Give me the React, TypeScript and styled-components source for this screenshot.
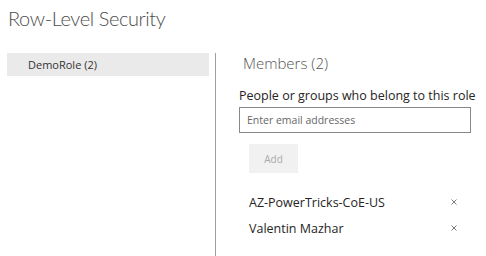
import React from "react";
import styled, { createGlobalStyle } from "styled-components";

const Global = createGlobalStyle`
  html, body { margin: 0; padding: 0; background: #fff; }
  body { font-family: "Open Sans", "Noto Sans", sans-serif; color: #252423; }
`;

const Page = styled.div`
  width: 486px;
  height: 256px;
  overflow: hidden;
  display: flex;
  flex-direction: column;
`;

const Title = styled.h1`
  margin: 0;
  padding: 5px 0 0 8px;
  height: 48px;
  box-sizing: border-box;
  font-family: "Lato", "Open Sans", sans-serif;
  font-size: 20px;
  font-weight: 300;
  letter-spacing: -0.4px;
  color: #4d4d4d;
  line-height: 26px;
`;

const Body = styled.div`
  flex: 1;
  display: flex;
  padding-top: 5px;
`;

const Sidebar = styled.div`
  width: 208px;
  padding-left: 7px;
  border-right: 1px solid #a0a0a0;
`;

const RoleItem = styled.div<{ $selected?: boolean }>`
  width: 202px;
  height: 23px;
  display: flex;
  align-items: center;
  padding-left: 21px;
  box-sizing: border-box;
  background: ${(p) => (p.$selected ? "#eaeaea" : "transparent")};
  font-size: 11px;
  color: #333;
`;

const Main = styled.div`
  flex: 1;
  padding-left: 23px;
  display: flex;
  flex-direction: column;
`;

const SectionTitle = styled.h2`
  margin: 0 0 0 4px;
  font-size: 15px;
  font-weight: 300;
  color: #555;
  line-height: 20px;
`;

const FieldLabel = styled.label`
  margin-top: 14px;
  font-size: 12.5px;
  color: #252423;
  line-height: 18px;
`;

const EmailInput = styled.input`
  margin-top: 2px;
  width: 232px;
  height: 26px;
  box-sizing: border-box;
  border: 1px solid #8a8886;
  padding: 0 7px;
  font-family: inherit;
  font-size: 10.5px;
  color: #333;
  outline: none;
  &::placeholder { color: #666; }
`;

const AddButton = styled.button`
  margin: 11px 0 0 10px;
  width: 49px;
  height: 29px;
  border: none;
  background: #f1f1f1;
  color: #aaa;
  font-family: inherit;
  font-size: 10px;
  padding: 0;
`;

const MemberList = styled.ul`
  list-style: none;
  margin: 16px 0 0 10px;
  padding: 0;
  width: 216px;
`;

const MemberRow = styled.li`
  height: 26px;
  display: flex;
  align-items: center;
  justify-content: space-between;
  font-size: 12.5px;
  color: #252423;
`;

const RemoveIcon = styled.span`
  width: 8px;
  height: 8px;
  display: flex;
  margin-right: 7px;
`;

const Cross = () => (
  <svg width="8" height="8" viewBox="0 0 8 8">
    <path d="M1.5 1.5 L6.5 6.5 M6.5 1.5 L1.5 6.5" stroke="#7a7a7a" strokeWidth="1" fill="none" />
  </svg>
);

const members = ["AZ-PowerTricks-CoE-US", "Valentin Mazhar"];

export default function App() {
  return (
    <Page>
      <Global />
      <Title>Row-Level Security</Title>
      <Body>
        <Sidebar>
          <RoleItem $selected>DemoRole (2)</RoleItem>
        </Sidebar>
        <Main>
          <SectionTitle>Members (2)</SectionTitle>
          <FieldLabel>People or groups who belong to this role</FieldLabel>
          <EmailInput placeholder="Enter email addresses" />
          <AddButton>Add</AddButton>
          <MemberList>
            {members.map((m) => (
              <MemberRow key={m}>
                {m}
                <RemoveIcon>
                  <Cross />
                </RemoveIcon>
              </MemberRow>
            ))}
          </MemberList>
        </Main>
      </Body>
    </Page>
  );
}
